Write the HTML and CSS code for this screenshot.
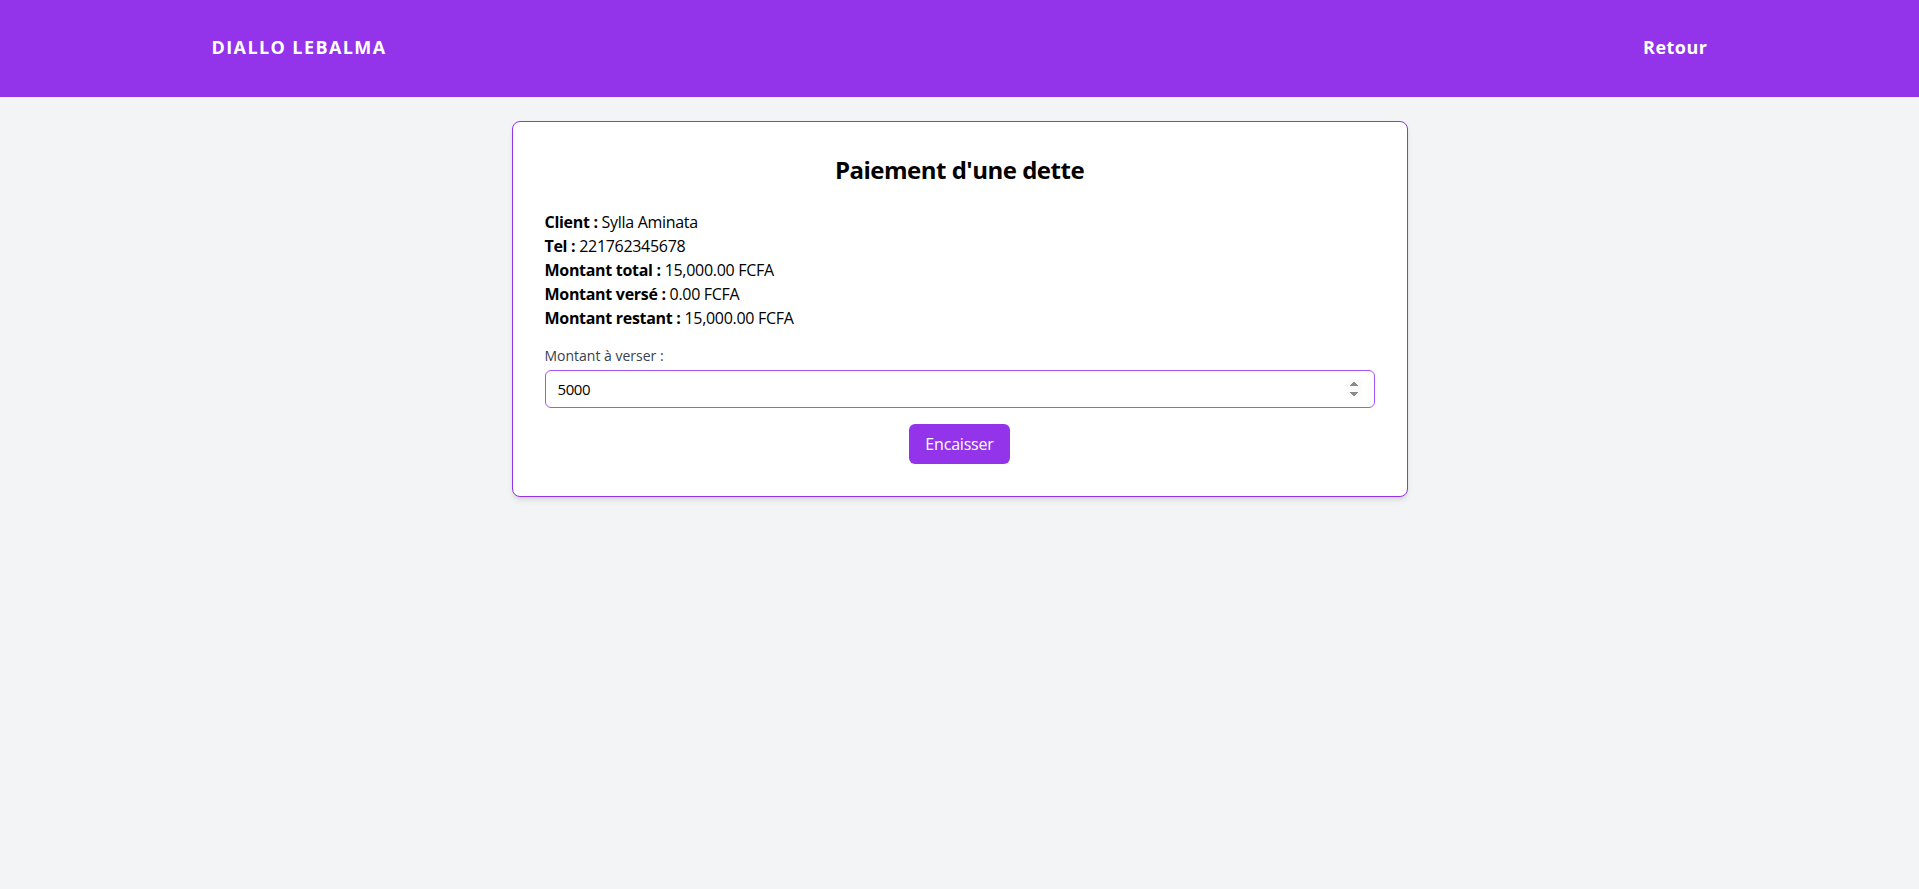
FILE: index.html
```html
<!DOCTYPE html>
<html lang="fr">
<head>
<meta charset="utf-8">
<title>Paiement d'une dette</title>
<link rel="stylesheet" href="styles.css">
</head>
<body>
<header class="topbar">
  <div class="topbar-inner">
    <a class="brand" href="#">DIALLO LEBALMA</a>
    <a class="back" href="#">Retour</a>
  </div>
</header>
<main class="main">
  <section class="card">
    <h1 class="card-title">Paiement d'une dette</h1>
    <div class="info">
      <p><strong>Client :</strong> Sylla Aminata</p>
      <p><strong>Tel :</strong> 221762345678</p>
      <p><strong>Montant total :</strong> 15,000.00 FCFA</p>
      <p><strong>Montant versé :</strong> 0.00 FCFA</p>
      <p><strong>Montant restant :</strong> 15,000.00 FCFA</p>
    </div>
    <form class="pay-form" onsubmit="return false;">
      <label class="field-label" for="montant">Montant à verser :</label>
      <input class="field-input" id="montant" type="number" value="5000" autofocus>
      <div class="actions">
        <button class="btn" type="submit">Encaisser</button>
      </div>
    </form>
  </section>
</main>
</body>
</html>
```

FILE: styles.css
```css
* {
  box-sizing: border-box;
}

html, body {
  margin: 0;
  padding: 0;
}

body {
  background: #f3f4f6;
  font-family: "Open Sans", "Noto Sans", "Liberation Sans", sans-serif;
  color: #000;
  min-height: 889px;
}

.topbar {
  background: #9333ea;
  height: 97px;
}

.topbar-inner {
  max-width: 1536px;
  margin: 0 auto;
  padding: 0 20px 4px;
  height: 100%;
  display: flex;
  align-items: center;
  justify-content: space-between;
}

.brand,
.back {
  color: #fff;
  text-decoration: none;
  font-weight: 700;
  font-size: 18px;
  line-height: 28px;
}

.brand {
  letter-spacing: 1.4px;
}

.back {
  letter-spacing: 0.5px;
}

.main {
  padding-top: 24px;
}

.card {
  width: 896px;
  margin: 0 auto;
  background: #fff;
  border: 1px solid #9333ea;
  border-radius: 8px;
  padding: 32px;
  box-shadow: 0 4px 6px -1px rgba(0, 0, 0, 0.1), 0 2px 4px -2px rgba(0, 0, 0, 0.1);
}

.card-title {
  margin: 0 0 24px;
  text-align: center;
  font-size: 24px;
  line-height: 32px;
  font-weight: 700;
  letter-spacing: -0.5px;
}

.info {
  margin-bottom: 16px;
}

.info p {
  margin: 0;
  font-size: 16px;
  line-height: 24px;
  letter-spacing: -0.3px;
}

.info strong {
  font-weight: 700;
}

.pay-form {
  display: flex;
  flex-direction: column;
}

.field-label {
  font-size: 14px;
  line-height: 20px;
  color: #374151;
  margin-bottom: 4px;
}

.field-input {
  width: 100%;
  height: 38px;
  border: 1px solid #a855f7;
  border-radius: 6px;
  padding: 0 12px;
  font-family: inherit;
  font-size: 15px;
  line-height: 20px;
  letter-spacing: -0.4px;
  color: #000;
  background: #fff;
  outline: none;
}

.field-input::-webkit-inner-spin-button {
  opacity: 1;
}

.actions {
  display: flex;
  justify-content: center;
  margin-top: 16px;
}

.btn {
  height: 40px;
  padding: 0 16px;
  border: none;
  border-radius: 6px;
  background: #9333ea;
  color: #fff;
  font-family: inherit;
  font-size: 16px;
  line-height: 24px;
  letter-spacing: -0.2px;
  cursor: pointer;
}
```
